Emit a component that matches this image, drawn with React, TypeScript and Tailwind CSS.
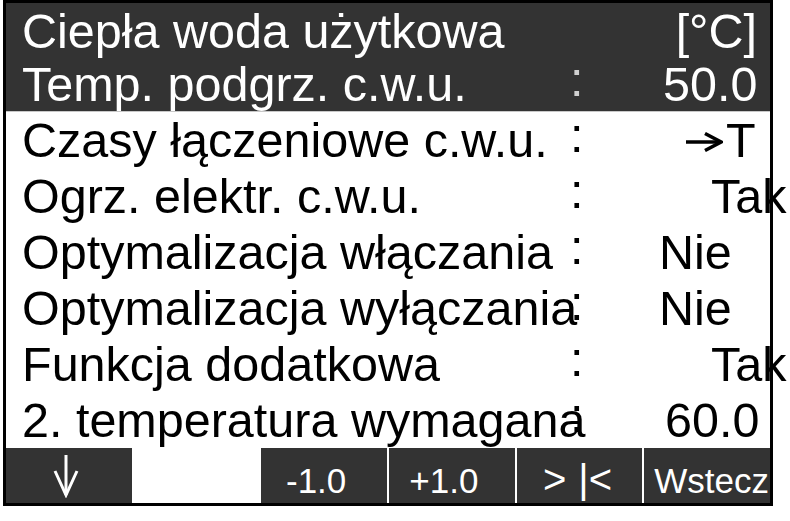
import React from 'react'

type Row = {
  label: string
  value: React.ReactNode
  pad: string
}

// small right arrow drawn like the panel glyph
function ArrowRight() {
  return (
    <svg width="38" height="20" viewBox="0 0 38 20" className="mr-[3px] self-center translate-y-[2px]">
      <path d="M1 10 H35" stroke="black" strokeWidth="3.5" fill="none" />
      <path d="M20 1.5 L36 10 L20 18.5" stroke="black" strokeWidth="3.5" fill="none" strokeLinejoin="miter" />
    </svg>
  )
}

function ArrowDown() {
  return (
    <svg width="26" height="44" viewBox="0 0 26 44">
      <path d="M13 1 V41" stroke="white" strokeWidth="3" fill="none" />
      <path d="M2 17 L13 41 L24 17" stroke="white" strokeWidth="3" fill="none" />
    </svg>
  )
}

const rows: Row[] = [
  {
    label: 'Czasy łączeniowe c.w.u.',
    value: (
      <span className="flex items-baseline">
        <ArrowRight />T
      </span>
    ),
    pad: 'pl-[95px]',
  },
  { label: 'Ogrz. elektr. c.w.u.', value: 'Tak', pad: 'pl-[121px]' },
  { label: 'Optymalizacja włączania', value: 'Nie', pad: 'pl-[69px]' },
  { label: 'Optymalizacja wyłączania', value: 'Nie', pad: 'pl-[69px]' },
  { label: 'Funkcja dodatkowa', value: 'Tak', pad: 'pl-[121px]' },
  { label: '2. temperatura wymagana', value: '60.0', pad: 'pl-[75px]' },
]

export default function App() {
  return (
    <div className="w-[790px] h-[521px] bg-white font-['Liberation_Sans',Arial,sans-serif]">
      <div className="ml-[3px] w-[770px] h-[506px] border-[3px] border-black flex flex-col">
        {/* header */}
        <div className="bg-[#333333] text-white text-[48.5px] border-b border-[#c8c8c8]">
          <div className="h-[54px] leading-[56px] flex justify-between pl-4 pr-[13px] whitespace-nowrap">
            <span>Ciepła woda użytkowa</span>
            <span>[°C]</span>
          </div>
          <div className="h-[54px] leading-[54px] flex pl-4 whitespace-nowrap">
            <span className="w-[548px] shrink-0">Temp. podgrz. c.w.u.</span>
            <span className="w-[20px] shrink-0 text-[#d0d0d0] -translate-y-[5px]">:</span>
            <span className="shrink-0 pl-[73px]">50.0</span>
          </div>
        </div>

        {/* settings list */}
        <div className="flex flex-col text-black text-[48.5px]">
          {rows.map((r) => (
            <div key={r.label} className="h-[56px] leading-[56px] flex pl-4 whitespace-nowrap">
              <span className="w-[548px] shrink-0">{r.label}</span>
              <span className="w-[20px] shrink-0 -translate-y-[5px]">:</span>
              <span className={`shrink-0 ${r.pad}`}>{r.value}</span>
            </div>
          ))}
        </div>

        {/* soft keys */}
        <div className="grid grid-cols-6 gap-[2px] h-[55px] bg-white text-white text-[35px] leading-[45px]">
          <div className="bg-[#333333] flex items-center justify-center pr-[5px]">
            <ArrowDown />
          </div>
          <div className="bg-white" />
          <div className="bg-[#333333] text-center pt-[10px] pr-4">-1.0</div>
          <div className="bg-[#333333] text-center pt-[10px] pr-4">+1.0</div>
          <div className="bg-[#333333] flex justify-center pt-[9px] pr-1 text-[40px]">
            <span>&gt;</span>
            <span className="ml-[12px]">|&lt;</span>
          </div>
          <div className="bg-[#333333] pt-[10px] pl-[10px] overflow-hidden whitespace-nowrap">Wstecz</div>
        </div>
      </div>
    </div>
  )
}
